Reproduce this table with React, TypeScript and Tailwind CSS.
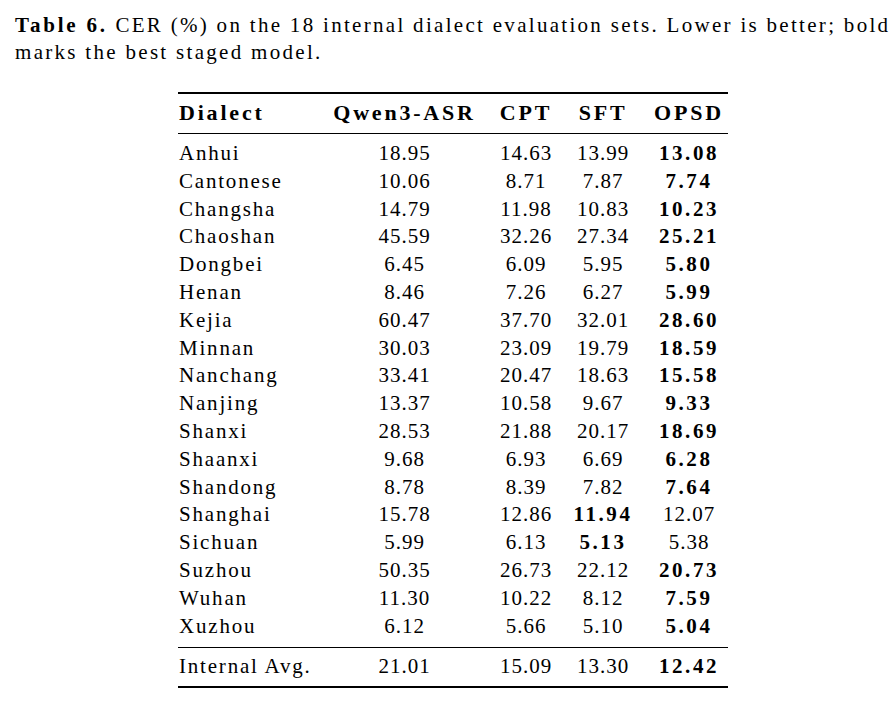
const rows: [string, string, string, string, string, number][] = [
  ["Anhui", "18.95", "14.63", "13.99", "13.08", 4],
  ["Cantonese", "10.06", "8.71", "7.87", "7.74", 4],
  ["Changsha", "14.79", "11.98", "10.83", "10.23", 4],
  ["Chaoshan", "45.59", "32.26", "27.34", "25.21", 4],
  ["Dongbei", "6.45", "6.09", "5.95", "5.80", 4],
  ["Henan", "8.46", "7.26", "6.27", "5.99", 4],
  ["Kejia", "60.47", "37.70", "32.01", "28.60", 4],
  ["Minnan", "30.03", "23.09", "19.79", "18.59", 4],
  ["Nanchang", "33.41", "20.47", "18.63", "15.58", 4],
  ["Nanjing", "13.37", "10.58", "9.67", "9.33", 4],
  ["Shanxi", "28.53", "21.88", "20.17", "18.69", 4],
  ["Shaanxi", "9.68", "6.93", "6.69", "6.28", 4],
  ["Shandong", "8.78", "8.39", "7.82", "7.64", 4],
  ["Shanghai", "15.78", "12.86", "11.94", "12.07", 3],
  ["Sichuan", "5.99", "6.13", "5.13", "5.38", 3],
  ["Suzhou", "50.35", "26.73", "22.12", "20.73", 4],
  ["Wuhan", "11.30", "10.22", "8.12", "7.59", 4],
  ["Xuzhou", "6.12", "5.66", "5.10", "5.04", 4],
];

const grid = "grid grid-cols-[144px_165px_78px_85px_78px] items-center";

function Num({ v, bold, pad }: { v: string; bold?: boolean; pad?: boolean }) {
  return (
    <div className={`text-center ${pad ? "pr-[9px]" : ""} ${bold ? "font-bold tracking-[2.6px]" : "tracking-[1px]"}`}>
      {v}
    </div>
  );
}

function Row({ name, vals, best }: { name: string; vals: string[]; best: number }) {
  return (
    <div className={`${grid} h-[27.8px] leading-[27.8px] text-[21px]`}>
      <div className="pl-[1px] tracking-[1.8px]">{name}</div>
      <Num v={vals[0]} />
      <Num v={vals[1]} />
      <Num v={vals[2]} bold={best === 3} pad />
      <Num v={vals[3]} bold={best === 4} />
    </div>
  );
}

export default function App() {
  return (
    <div className="w-[896px] h-[709px] bg-white text-black font-['Liberation_Serif',serif] overflow-hidden">
      {/* Caption */}
      <p className="pl-[15px] pt-[12px] text-[21px] leading-[27px] tracking-[2.3px] whitespace-nowrap">
        <span className="font-bold tracking-[2.8px]">Table 6.</span> CER (%) on the 18 internal dialect evaluation sets. Lower is better; bold
        <br />
        marks the best staged model.
      </p>

      {/* Table */}
      <div className="ml-[178px] mt-[26px] w-[550px]">
        <div className="h-[2px] bg-black" />
        <div className={`${grid} mt-[4.7px] h-[27.8px] leading-[27.8px] text-[22px] font-bold tracking-[2.8px]`}>
          <div className="pl-[1px]">Dialect</div>
          <div className="text-center">Qwen3-ASR</div>
          <div className="text-center">CPT</div>
          <div className="text-center pr-[9px]">SFT</div>
          <div className="text-center">OPSD</div>
        </div>
        <div className="mt-[6.5px] h-px bg-black" />
        <div className="mt-[6px]">
          {rows.map(([name, a, b, c, d, best]) => (
            <Row key={name} name={name} vals={[a, b, c, d]} best={best} />
          ))}
        </div>
        <div className="mt-[6.6px] h-px bg-black" />
        <div className={`${grid} mt-[5.5px] h-[27.8px] leading-[27.8px] text-[21px]`}>
          <div className="pl-[1px] tracking-[1.8px]">Internal Avg.</div>
          <Num v="21.01" />
          <Num v="15.09" />
          <Num v="13.30" pad />
          <Num v="12.42" bold />
        </div>
        <div className="mt-[4.7px] h-[2px] bg-black" />
      </div>
    </div>
  );
}
